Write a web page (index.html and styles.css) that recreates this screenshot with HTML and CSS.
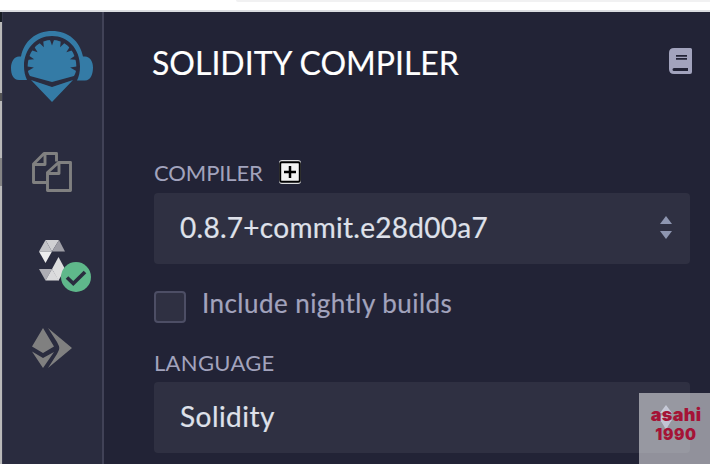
FILE: index.html
```html
<!DOCTYPE html>
<html lang="en">
<head>
<meta charset="utf-8">
<title>Solidity compiler</title>
<link rel="stylesheet" href="styles.css">
</head>
<body>
<div class="browser-bar"><div class="address"></div></div>
<div class="workspace">
  <div class="edge"><div class="edge-dark"></div><div class="edge-mark"></div><div class="edge-mark second"></div></div>
  <nav class="sidebar">
    <svg class="logo" width="82" height="72" viewBox="0 0 82 72">
      <g fill="#347ba6">
        <path d="M10 25.500C13 10 25 0 41 0s28 10 31 25.500h2c5 0 8 5 8 11s-2 13-8 13h-8c2-4 3-9 3-14C69 18 57 5 41 5S13 18 13 35c0 5 1 10 3 14H8c-6 0-8-6-8-12s3-11.500 8-11.500z"/>
        <path d="M19 45C16 40 16.500 36 17 31 19 17 29 9 41 9s22 8 24 22c.5 5 1 9-2 14L41 51z"/>
        <path d="M20 49 41 56l21-7-21 22z"/>
      </g>
      <g fill="#2a2c3f">
        <path d="M38.300 7h5.400L41 14.500z"/>
        <path d="M38.300 7h5.400L41 14.500z" transform="rotate(26 41 33)"/>
        <path d="M38.300 7h5.400L41 14.500z" transform="rotate(-26 41 33)"/>
        <path d="M38.300 7h5.400L41 14.500z" transform="rotate(51 41 33)"/>
        <path d="M38.300 7h5.400L41 14.500z" transform="rotate(-51 41 33)"/>
        <path d="M38.300 7h5.400L41 14.500z" transform="rotate(75 41 33)"/>
        <path d="M38.300 7h5.400L41 14.500z" transform="rotate(-75 41 33)"/>
        <path d="M38.300 7h5.400L41 14.500z" transform="rotate(101 41 33)"/>
        <path d="M38.300 7h5.400L41 14.500z" transform="rotate(-101 41 33)"/>
      </g>
    </svg>
    <svg class="files" width="40" height="40" viewBox="0 0 40 40" fill="none" stroke="#808080" stroke-width="2.900" stroke-linejoin="round">
      <path d="M14.500 30.500h-13V12L12 1.500h12.500v8M13 2v10.500H2"/>
      <path d="M15.500 38.500v-18l11-10h12v28zM27 11v10.500H16"/>
    </svg>
    <div class="compiler-icon">
      <svg width="26" height="41" viewBox="0 0 26 41">
        <path fill="#d0d0d3" d="M6.500 0H20l-7 11.500z"/><path fill="#c4c4c8" d="M6.500 0 13 11.500H0z"/><path fill="#ededee" d="M0 11.500h13L6.500 23z"/><path fill="#9e9ea6" d="M20 0l6 11.500H13z"/>
        <path fill="#adadb4" d="M0 29h13L6.500 40.500z"/><path fill="#dadadc" d="M13 29 6.500 40.500H20z"/><path fill="#dededf" d="M19.500 17 26 29l-6.500 11.500L13 29z"/>
      </svg>
      <svg class="status" width="30" height="30" viewBox="0 0 30 30"><circle cx="15" cy="15" r="15" fill="#5fb88b"/><path d="m6 15.500 6.300 6L24 10" fill="none" stroke="#2a2c3f" stroke-width="3.700"/></svg>
    </div>
    <svg class="deploy" width="40" height="40" viewBox="0 0 40 40" fill="#808080"><path d="M11 0 22 18.500 11 25 0 18.500zM0 23.500l11 6.500 11-6L11 40zM16 0l24 20-24 20 9-14c3-6 3-6 0-12z"/></svg>
  </nav>
  <main class="panel">
    <header class="heading">
      <h1>SOLIDITY COMPILER</h1>
      <svg class="book" width="23" height="26" viewBox="0 0 23 26"><path fill="#a2a3bd" d="M5 0h16.500Q23 0 23 1.500V24q0 2-2 2H5q-5 0-5-5V5q0-5 5-5z"/><path fill="#222336" d="M7 7h11v1.700H7zm0 3h11v1.700H7zM5 20h14v3H5q-1.500 0-1.500-1.500T5 20z"/></svg>
    </header>
    <div class="label-row"><span class="label compiler">COMPILER</span>
      <svg width="22" height="24" viewBox="0 0 22 24"><rect width="22" height="24" rx="3" fill="#dedee0"/><rect x="1.200" y="2.200" width="19.600" height="19.600" rx="1.500" fill="#f3f3f3" stroke="#000" stroke-width="2"/><path d="M5 12h12M11 6v12" stroke="#000" stroke-width="2.500"/></svg>
    </div>
    <div class="select"><span class="version">0.8.7+commit.e28d00a7</span><svg width="12" height="23" viewBox="0 0 12 23" fill="#8e95b0"><path d="M0 8 6 0l6 8zM0 15h12l-6 8z"/></svg></div>
    <div class="check-row"><span class="checkbox"></span><span class="nightly">Include nightly builds</span></div>
    <div class="label language">LANGUAGE</div>
    <div class="select"><span class="solidity">Solidity</span><svg width="12" height="23" viewBox="0 0 12 23" fill="#8e95b0"><path d="M0 8 6 0l6 8zM0 15h12l-6 8z"/></svg></div>
  </main>
</div>
<div class="watermark"><svg width="12" height="23" viewBox="0 0 12 23" fill="#c2c5d4"><path d="M0 11.500 6 0l6 11.500L6 23z"/></svg><span class="name">asahi</span><span class="year">1990</span></div>
</body>
</html>
```
FILE: styles.css
```css
* { box-sizing: border-box; }
body { margin: 0; width: 710px; height: 464px; overflow: hidden; background: #222336; font-family: Lato, "Liberation Sans", sans-serif; position: relative; }
svg { display: block; flex: none; }
.browser-bar { height: 12px; background: #fff; border-bottom: 2px solid #dadce0; }
.address { height: 2px; margin-left: 236px; background: #f1f1f2; border-bottom-left-radius: 6px; }
.workspace { display: flex; height: 452px; }
.edge { width: 2px; background: #b9b9b9; }
.edge-dark { height: 10px; background: #171c24; }
.edge-mark { height: 8px; margin-top: 71px; background: #555; }
.edge-mark.second { height: 28px; margin-top: 57px; background: #858585; }
.sidebar { width: 102px; background: #2a2c3f; border-left: 1px solid #36384c; border-right: 2px solid #414257; padding-top: 19px; }
.logo { margin-left: 7.5px; }
.files { margin: 49px 0 0 29px; }
.compiler-icon { position: relative; width: 52px; height: 52px; margin: 48px 0 0 36px; }
.status { position: absolute; left: 22px; top: 22px; }
.deploy { margin: 36px 0 0 29px; }
.panel { flex: 1; padding: 31px 20px 0 50px; }
.heading { display: flex; justify-content: space-between; height: 117px; margin: 0 -2px; padding-top: 5px; }
h1 { margin: -5px 0 0; color: #fff; font-size: 32px; font-weight: 400; line-height: 40px; white-space: nowrap; -webkit-text-stroke: .15px #fff; }
.label-row { display: flex; gap: 16px; height: 33px; }
.label { color: #a2a3bd; font-size: 22px; line-height: 26px; letter-spacing: -.1px; white-space: nowrap; }
.compiler { width: 109px; }
.select { display: flex; align-items: center; justify-content: space-between; height: 71px; padding: 0 18px 2px 26px; background: #2f3042; border-radius: 4px; color: #dfe1ea; font-size: 28px; }
.select span { margin-top: -2px; -webkit-text-stroke: .2px #dfe1ea; }
.version { letter-spacing: .28px; }
.solidity { letter-spacing: .45px; }
.check-row { display: flex; gap: 16px; height: 86px; padding-top: 27px; }
.checkbox { width: 32px; height: 32px; background: #2f3042; border: 2px solid #4d4e65; border-radius: 4px; }
.nightly { color: #a2a3bd; font-size: 26px; line-height: 28px; margin-top: -2px; letter-spacing: .45px; -webkit-text-stroke: .2px #a2a3bd; }
.language { height: 32px; line-height: 26px; letter-spacing: .3px; }
.watermark { position: absolute; left: 639px; top: 393px; width: 71px; height: 71px; padding: 12px 0 0 3px; background: rgba(255,255,255,.5); color: #a51336; text-align: center; font-family: Inter, sans-serif; font-weight: 900; font-size: 18px; line-height: 20px; }
.watermark svg { position: absolute; left: 21px; top: 14px; }
.watermark span { display: block; position: relative; }
.watermark .name { letter-spacing: .3px; }
.watermark .year { font-size: 15.5px; line-height: 20px; letter-spacing: .6px; }
```
